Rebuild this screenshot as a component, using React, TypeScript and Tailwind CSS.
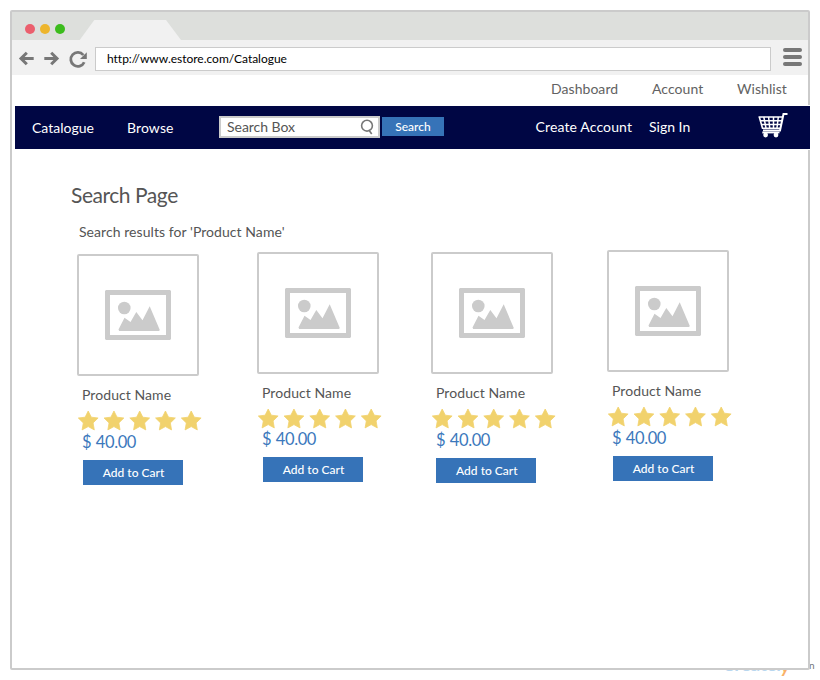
import React from "react";

type Product = {
  id: number;
  card: string;
  name: string;
  stars: string;
  price: string;
  button: string;
};

const products: Product[] = [
  { id: 1, card: "ml-[65px] mt-[13px]", name: "mt-[10px]", stars: "mt-[6px] ml-0", price: "mt-0", button: "mt-[8px] ml-[6px]" },
  { id: 2, card: "ml-[58px] mt-[11px]", name: "mt-[10px]", stars: "mt-[5.5px] ml-0", price: "-mt-[0.5px]", button: "mt-[7.5px] ml-[6px]" },
  { id: 3, card: "ml-[52px] mt-[11px]", name: "mt-[10px]", stars: "mt-[6px] -ml-[0.5px]", price: "mt-0", button: "mt-[8.2px] ml-[5.3px]" },
  { id: 4, card: "ml-[54px] mt-[9px]", name: "mt-[10px]", stars: "mt-[6px] ml-0", price: "mt-0", button: "mt-[8.2px] ml-[6px]" },
];

function Placeholder() {
  return (
    <div className="flex h-[122px] w-[122px] items-center justify-center rounded-[2px] border-2 border-[#cbcbcb] bg-white">
      <svg width="66" height="50" viewBox="0 0 66 50" fill="#cbcbcb">
        <path fillRule="evenodd" d="M1 0H65L66 1V49L65 50H1L0 49V1ZM5 5V45H61V5Z" />
        <circle cx="19.3" cy="18" r="6.3" />
        <path d="M13.5 39.5L19.5 27.7L25.5 32L31.3 22L37.5 30.3L44.7 16.3L54.8 40L54 41H14.2Z" />
      </svg>
    </div>
  );
}

function Stars() {
  return (
    <svg width="126" height="21" viewBox="0 0 126 21" fill="#f1d26d" stroke="#f1d26d" strokeWidth="0.8" strokeLinejoin="round">
      {[11.2, 36.95, 62.7, 88.45, 114.2].map((x) => (
        <path
          key={x}
          transform={`translate(${x} 10.8)`}
          d="M0 -9.8L3.1 -3.6L9.9 -2.8L4.9 2.1L6.1 9.1L0 5.8L-6.1 9.1L-4.9 2.1L-9.9 -2.8L-3.1 -3.6Z"
        />
      ))}
    </svg>
  );
}

function ProductCard({ p }: { p: Product }) {
  return (
    <article className={`flex w-[122px] shrink-0 flex-col ${p.card}`}>
      <Placeholder />
      <h3 className={`ml-[5px] h-[18px] text-[14px] leading-[18px] tracking-[0.07px] whitespace-nowrap text-[#555] ${p.name}`}>Product Name</h3>
      <div className={`h-[21px] w-[126px] ${p.stars}`}>
        <Stars />
      </div>
      <p className={`ml-[5px] h-[21px] text-[16.5px] leading-[23px] tracking-[-0.4px] [word-spacing:0.8px] text-[#3b78bc] ${p.price}`}>$ 40.00</p>
      <button className={`h-[25px] w-[100px] shrink-0 bg-[#3673b8] pl-[1px] text-[12px] leading-[25px] font-medium whitespace-nowrap text-white ${p.button}`}>
        Add to Cart
      </button>
    </article>
  );
}

function Cart() {
  return (
    <svg width="31" height="26" viewBox="0 0 31 26" fill="none" stroke="#fff">
      <path strokeWidth="2" d="M29.5 2H25.5L22 18.5H5" />
      <path strokeWidth="1.6" d="M0.5 5H25M1.3 5L4.5 16.3H22.5M2.3 8.8H24M3.5 12.5H23" />
      <path strokeWidth="1.5" d="M5.8 5L8 16M10.6 5L11.7 16M15.5 5L15.5 16M20.3 5L19 16" />
      <path strokeWidth="1.8" d="M4.3 20.5H21.5" />
      <circle cx="7.6" cy="23" r="2.4" fill="#fff" stroke="none" />
      <circle cx="18" cy="23" r="2.4" fill="#fff" stroke="none" />
    </svg>
  );
}

export default function App() {
  return (
    <div className="relative h-[680px] w-[820px] overflow-hidden bg-white p-[10px] font-['Lato',sans-serif]">
      <div className="absolute top-[652px] left-[722px] flex text-[19px] leading-[24px] font-bold tracking-[-0.3px] text-[#b9d7ef]">
        <span>Create</span>
        <span>l</span>
        <span className="mt-[2px] text-[#f9b267] italic">y</span>
      </div>
      <span className="absolute top-[659px] left-[809px] text-[10px] leading-[12px] text-[#777]">n</span>

      <div className="relative flex h-[660px] w-[800px] flex-col rounded-[2px] border-2 border-[#cbcbcb] bg-white">
        <div className="flex h-[28px] shrink-0 items-end bg-[#dddfdc]">
          <div className="mb-[6px] ml-[13px] flex gap-[5px]">
            <span className="h-[10px] w-[10px] rounded-full bg-[#eb5f6d]" />
            <span className="h-[10px] w-[10px] rounded-full bg-[#edb52c]" />
            <span className="h-[10px] w-[10px] rounded-full bg-[#3bbc1c]" />
          </div>
          <svg className="ml-[14px]" width="103" height="20" viewBox="0 0 103 20">
            <path d="M0.7 20L15.3 0H87L102 20Z" fill="#f1f1f1" />
          </svg>
        </div>

        <div className="flex h-[35px] shrink-0 items-start bg-[#f1f1f1]">
          <svg className="ml-[6px]" width="77" height="35" viewBox="18 40 77 35" fill="none" stroke="#777">
            <path strokeWidth="3" d="M21 58.5H33.7M26.8 52.8L21 58.5L26.8 64.3" />
            <path strokeWidth="3" d="M44.3 58.5H57M51.2 52.8L57 58.5L51.2 64.3" />
            <path strokeWidth="2.8" d="M83.3 55A7 7 0 1 0 84.2 62.2" />
            <path d="M86.8 52.3V59H80Z" fill="#777" stroke="none" />
          </svg>
          <div className="mt-[7px] h-[24px] w-[676px] border border-[#cbcbcb] bg-white pl-[11px] text-[12px] leading-[22px] tracking-[-0.02px] text-black">
            http://www.estore.com/Catalogue
          </div>
          <div className="mt-[8px] ml-[12px] flex flex-col gap-[3px]">
            <span className="h-[4px] w-[19px] rounded-full bg-[#777]" />
            <span className="h-[4px] w-[19px] rounded-full bg-[#777]" />
            <span className="h-[4px] w-[19px] rounded-full bg-[#777]" />
          </div>
        </div>

        <div className="flex h-[30px] shrink-0 text-[14px] leading-[28px] tracking-[0.05px] whitespace-nowrap text-[#626262]">
          <span className="ml-[539px] w-[101px]">Dashboard</span>
          <span className="w-[85px]">Account</span>
          <span>Wishlist</span>
        </div>

        <nav className="-mr-[2px] ml-[2px] flex h-[45px] shrink-0 border border-r-0 border-white bg-[#000644] text-[14px] leading-[43px] whitespace-nowrap text-white">
          <span className="ml-[17px] w-[95px]">Catalogue</span>
          <span className="w-[92px] tracking-[0.1px]">Browse</span>
          <div className="mt-[10px] flex h-[22px] w-[161px] items-center justify-between border-2 border-[#cbcbcb] bg-white pr-[4px] pl-[6px] leading-[18px] text-[#555]">
            <span className="tracking-[-0.03px]">Search Box</span>
            <svg width="14" height="16" viewBox="0 0 14 16" fill="none" stroke="#777" strokeWidth="1.6">
              <circle cx="7" cy="6.7" r="5.4" />
              <path d="M8.7 10.7L11.7 15" />
            </svg>
          </div>
          <button className="mt-[10.5px] ml-[2px] h-[19.5px] w-[62px] bg-[#3673b8] text-[12px] leading-[20px] font-medium tracking-normal">Search</button>
          <span className="ml-[91.5px] w-[113.5px] leading-[42px] tracking-[0.13px]">Create Account</span>
          <span className="w-[109px] leading-[42px]">Sign In</span>
          <div className="mt-[6px]">
            <Cart />
          </div>
        </nav>

        <main className="flex grow flex-col text-[#555]">
          <h1 className="mt-[32px] ml-[59px] h-[27px] text-[21px] leading-[26px] tracking-[-0.45px]">Search Page</h1>
          <p className="mt-[14px] ml-[67px] h-[18px] text-[14px] leading-[18px] tracking-[0.06px]">Search results for 'Product Name'</p>
          <section className="flex items-start">
            {products.map((p) => (
              <ProductCard key={p.id} p={p} />
            ))}
          </section>
        </main>
      </div>
    </div>
  );
}
